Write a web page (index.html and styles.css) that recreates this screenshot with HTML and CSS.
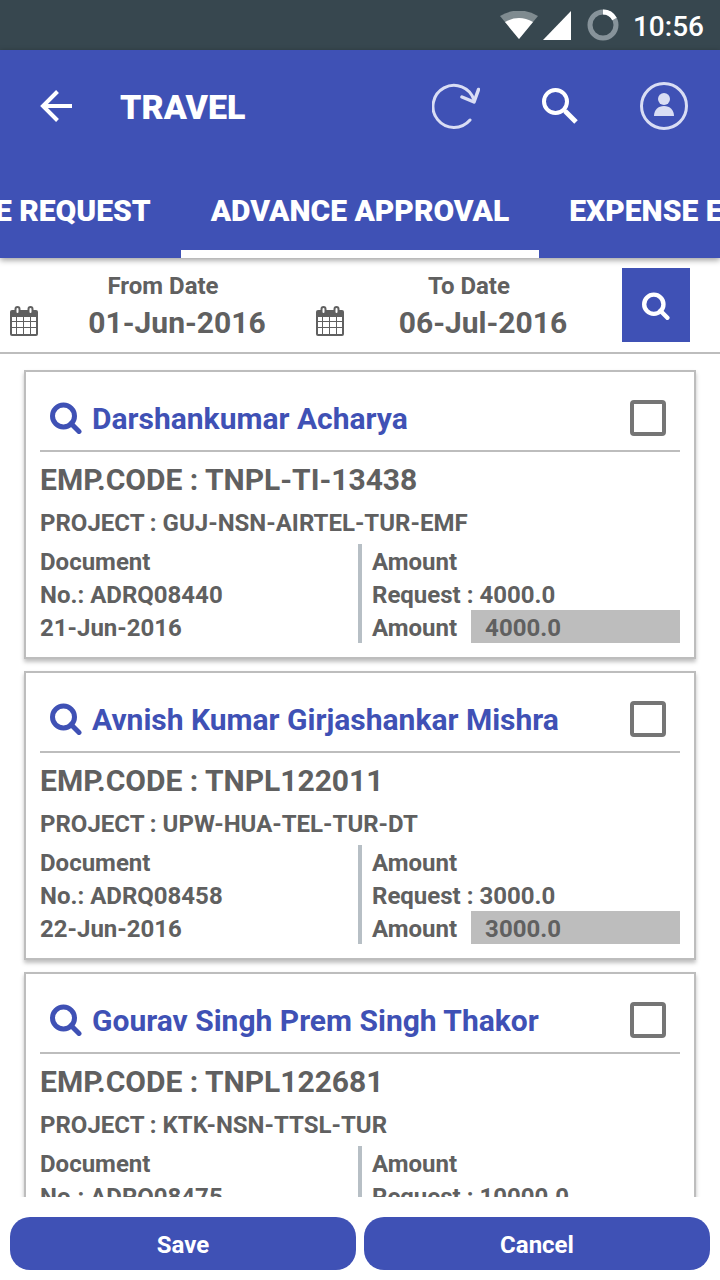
FILE: index.html
```html
<!DOCTYPE html>
<html lang="en">
<head>
    <meta charset="UTF-8">
    <meta name="viewport" content="width=device-width, initial-scale=1.0">
    <title>Travel - Advance Approval</title>
    <link rel="stylesheet" href="styles.css">
</head>
<body>
    <!-- Shared icons -->
    <svg class="sprite" aria-hidden="true">
        <symbol id="icon-search" viewBox="0 0 32 32">
            <circle cx="13.5" cy="14" r="11" fill="none" stroke="currentColor" stroke-width="5"/>
            <path d="M21 21.500l8 8" stroke="currentColor" stroke-width="5" stroke-linecap="round"/>
        </symbol>
        <symbol id="icon-calendar" viewBox="0 0 28 30">
            <path d="M2 4h24a2 2 0 0 1 2 2v22a2 2 0 0 1-2 2H2a2 2 0 0 1-2-2V6a2 2 0 0 1 2-2z" fill="currentColor"/>
            <path d="M2 11h4v4H2zM7 11h6v4H7zM14 11h6v4h-6zM21 11h5v4h-5zM2 16h4v5H2zM7 16h6v5H7zM14 16h6v5h-6zM21 16h5v5h-5zM2 22h4v6H2zM7 22h6v6H7zM14 22h6v6h-6zM21 22h5v6h-5z" fill="#fff"/>
            <rect x="5.500" y="1" width="4" height="7" rx="2" fill="#fff" stroke="currentColor" stroke-width="2"/>
            <rect x="18.500" y="1" width="4" height="7" rx="2" fill="#fff" stroke="currentColor" stroke-width="2"/>
        </symbol>
    </svg>

    <div class="status-bar">
        <svg width="40" height="30" viewBox="0 0 40 30">
            <path d="M1 5Q20-6 39 5L20 28z" fill="#7f8b90"/>
            <path d="M6 11Q20 3 34 11L20 28z" fill="#fff"/>
        </svg>
        <svg width="28" height="30" viewBox="0 0 28 30">
            <path d="M0 29L28 0v29z" fill="#fff"/>
        </svg>
        <svg class="loader" width="32" height="32" viewBox="0 0 32 32" fill="none" stroke-width="5">
            <circle cx="16" cy="16" r="13" stroke="#87939a"/>
            <path d="M16 3a13 13 0 0 1 11.500 7" stroke="#fff"/>
        </svg>
        <span class="clock">10:56</span>
    </div>

    <header class="header">
        <div class="app-bar">
            <button class="icon-btn" aria-label="Back">
                <svg width="32" height="32" viewBox="0 0 32 32" fill="none" stroke="#fff" stroke-width="4">
                    <path d="M32 16H3M17.500 1.500L3 16l14.500 14.500"/>
                </svg>
            </button>
            <h1>TRAVEL</h1>
            <div class="actions">
                <button class="icon-btn" aria-label="Refresh">
                    <svg width="48" height="48" viewBox="0 0 48 48" fill="none" stroke="#d9ddf4" stroke-width="3" stroke-linecap="round" stroke-linejoin="round">
                        <path d="M38 38A21 21 0 1 1 42 18"/>
                        <path d="M30 15l12 5L46.500 7.500" stroke-width="3.500"/>
                    </svg>
                </button>
                <button class="icon-btn" aria-label="Search">
                    <svg width="48" height="48" viewBox="0 0 48 48" fill="none" stroke="#fff">
                        <circle cx="19.500" cy="19.500" r="11.500" stroke-width="4"/>
                        <path d="M27 27l2.500 2.500" stroke-width="3"/>
                        <path d="M29 29l11 11" stroke-width="5"/>
                    </svg>
                </button>
                <button class="icon-btn" aria-label="Profile">
                    <svg width="48" height="48" viewBox="0 0 48 48" fill="#d9ddf4">
                        <circle cx="24" cy="24" r="22.500" fill="none" stroke="#d9ddf4" stroke-width="3"/>
                        <circle cx="24" cy="17" r="6"/>
                        <path d="M14 34c0-6 4-10 10-10s10 4 10 10z"/>
                    </svg>
                </button>
            </div>
        </div>
        <nav class="tabs">
            <a href="#" class="tab tab-prev">ADVANCE REQUEST</a>
            <a href="#" class="tab active">ADVANCE APPROVAL</a>
            <a href="#" class="tab tab-next">EXPENSE ENTRY</a>
        </nav>
    </header>

    <form class="filter">
        <div class="date-field">
            <label for="from">From Date</label>
            <svg width="28" height="30"><use href="#icon-calendar"/></svg>
            <input type="text" id="from" value="01-Jun-2016">
        </div>
        <div class="date-field">
            <label for="to">To Date</label>
            <svg width="28" height="30"><use href="#icon-calendar"/></svg>
            <input type="text" id="to" value="06-Jul-2016">
        </div>
        <button type="button" class="filter-btn" aria-label="Search dates">
            <svg width="28" height="28"><use href="#icon-search"/></svg>
        </button>
    </form>

    <main class="list">
        <article class="card">
            <div class="card-head">
                <svg width="32" height="32"><use href="#icon-search"/></svg>
                <label class="name" for="pick1">Darshankumar Acharya</label>
                <input type="checkbox" id="pick1">
            </div>
            <p class="emp">EMP.CODE : TNPL-TI-13438</p>
            <p class="project">PROJECT : GUJ-NSN-AIRTEL-TUR-EMF</p>
            <div class="details">
                <div class="document">
                    <p>Document</p>
                    <p>No.: ADRQ08440</p>
                    <p>21-Jun-2016</p>
                </div>
                <div class="amount">
                    <p>Amount</p>
                    <p>Request : 4000.0</p>
                    <div class="amount-row">
                        <label for="amount1">Amount</label>
                        <input type="text" id="amount1" value="4000.0">
                    </div>
                </div>
            </div>
        </article>

        <article class="card">
            <div class="card-head">
                <svg width="32" height="32"><use href="#icon-search"/></svg>
                <label class="name" for="pick2">Avnish Kumar Girjashankar Mishra</label>
                <input type="checkbox" id="pick2">
            </div>
            <p class="emp">EMP.CODE : TNPL122011</p>
            <p class="project">PROJECT : UPW-HUA-TEL-TUR-DT</p>
            <div class="details">
                <div class="document">
                    <p>Document</p>
                    <p>No.: ADRQ08458</p>
                    <p>22-Jun-2016</p>
                </div>
                <div class="amount">
                    <p>Amount</p>
                    <p>Request : 3000.0</p>
                    <div class="amount-row">
                        <label for="amount2">Amount</label>
                        <input type="text" id="amount2" value="3000.0">
                    </div>
                </div>
            </div>
        </article>

        <article class="card">
            <div class="card-head">
                <svg width="32" height="32"><use href="#icon-search"/></svg>
                <label class="name" for="pick3">Gourav Singh Prem Singh Thakor</label>
                <input type="checkbox" id="pick3">
            </div>
            <p class="emp">EMP.CODE : TNPL122681</p>
            <p class="project">PROJECT : KTK-NSN-TTSL-TUR</p>
            <div class="details">
                <div class="document">
                    <p>Document</p>
                    <p>No.: ADRQ08475</p>
                </div>
                <div class="amount">
                    <p>Amount</p>
                    <p>Request : 10000.0</p>
                </div>
            </div>
        </article>
    </main>

    <footer class="footer">
        <button type="button">Save</button>
        <button type="button">Cancel</button>
    </footer>
</body>
</html>
```

FILE: styles.css
```css
* {
    margin: 0;
    padding: 0;
    box-sizing: border-box;
}

:root {
    --primary: #3f51b5;
    --text: #606060;
    --line: #bdbdbd;
}

body {
    font-family: Roboto, "Liberation Sans", sans-serif;
    font-size: 24px;
    font-weight: 700;
    color: var(--text);
    background: #fff;
    height: 100vh;
    display: flex;
    flex-direction: column;
}

button,
input {
    font: inherit;
    color: inherit;
    border: none;
    background: none;
}

button {
    cursor: pointer;
}

svg {
    display: block;
    flex-shrink: 0;
}

.sprite {
    display: none;
}

.status-bar {
    height: 50px;
    flex-shrink: 0;
    display: flex;
    align-items: center;
    justify-content: flex-end;
    gap: 4px;
    padding: 2px 16px 0 0;
    background: #37474f;
    color: #fff;
}

.loader {
    margin: 0 10px 2px 12px;
}

.clock {
    font-size: 28px;
    font-weight: 500;
}

/* Header */
.header {
    flex-shrink: 0;
    position: relative;
    background: var(--primary);
    color: #fff;
    box-shadow: 0 2px 6px rgba(0, 0, 0, 0.4);
}

.app-bar {
    height: 112px;
    display: flex;
    align-items: center;
    padding: 0 32px 0 40px;
}

h1 {
    margin-left: 48px;
    padding-top: 2px;
    font-size: 34px;
    font-weight: 900;
}

.actions {
    display: flex;
    gap: 56px;
    margin-left: auto;
}

.tabs {
    display: grid;
    grid-template-columns: minmax(0, 1fr) auto minmax(0, 1fr);
    height: 96px;
}

.tab {
    display: flex;
    align-items: center;
    padding: 8px 30px 0;
    border-bottom: 8px solid transparent;
    overflow: hidden;
    white-space: nowrap;
    font-size: 30px;
    font-weight: 900;
    color: #fff;
    text-decoration: none;
}

.tab.active {
    border-color: #fff;
}

.tab-prev {
    justify-content: flex-end;
}

/* Date filter */
.filter {
    flex-shrink: 0;
    display: flex;
    align-items: center;
    height: 96px;
    padding: 0 30px 0 10px;
    border-bottom: 2px solid var(--line);
}

.date-field {
    flex: 1;
    display: grid;
    grid-template-columns: 28px 1fr;
    align-items: start;
    text-align: center;
    padding-bottom: 2px;
}

.date-field label {
    grid-column: 1 / -1;
    line-height: 36px;
}

.date-field svg {
    margin-top: 2px;
}

.date-field input {
    width: 100%;
    min-width: 0;
    height: 36px;
    font-size: 30px;
    text-align: center;
}

.filter-btn {
    width: 68px;
    height: 74px;
    display: flex;
    align-items: center;
    justify-content: center;
    padding-top: 2px;
    background: var(--primary);
    color: #fff;
}

/* Approval cards */
.list {
    flex: 1;
    min-height: 0;
    overflow-y: auto;
    scrollbar-width: none;
    padding: 16px 24px 0;
}

.card {
    margin-bottom: 12px;
    padding: 0 14px 14px;
    border: 2px solid var(--line);
    box-shadow: 0 3px 4px rgba(0, 0, 0, 0.25);
}

.card-head {
    display: flex;
    align-items: center;
    gap: 10px;
    height: 80px;
    padding: 14px 14px 0 10px;
    border-bottom: 2px solid var(--line);
    color: var(--primary);
}

.name {
    flex: 1;
    font-size: 30px;
}

.card-head input {
    appearance: none;
    width: 36px;
    height: 36px;
    border: 4px solid #757575;
    border-radius: 4px;
}

.card-head input:checked {
    background: var(--primary);
}

.emp {
    margin-top: 10px;
    font-size: 30px;
    line-height: 36px;
}

.project {
    margin: 10px 0 6px;
    line-height: 30px;
}

.details {
    display: grid;
    grid-template-columns: minmax(0, 1fr) minmax(0, 1fr);
    line-height: 29px;
}

.details p,
.details label {
    padding-top: 4px;
}

.document {
    border-right: 2px solid #b7bfc5;
}

.amount {
    padding-left: 10px;
    border-left: 2px solid #b7bfc5;
}

.amount-row {
    display: flex;
    gap: 14px;
}

.amount-row input {
    flex: 1;
    min-width: 0;
    height: 33px;
    padding: 2px 0 0 14px;
    background: var(--line);
}

/* Bottom buttons */
.footer {
    flex-shrink: 0;
    display: flex;
    gap: 8px;
    padding: 20px 10px 10px;
}

.footer button {
    flex: 1;
    height: 53px;
    padding-top: 2px;
    border-radius: 20px;
    background: var(--primary);
    color: #fff;
}
```
